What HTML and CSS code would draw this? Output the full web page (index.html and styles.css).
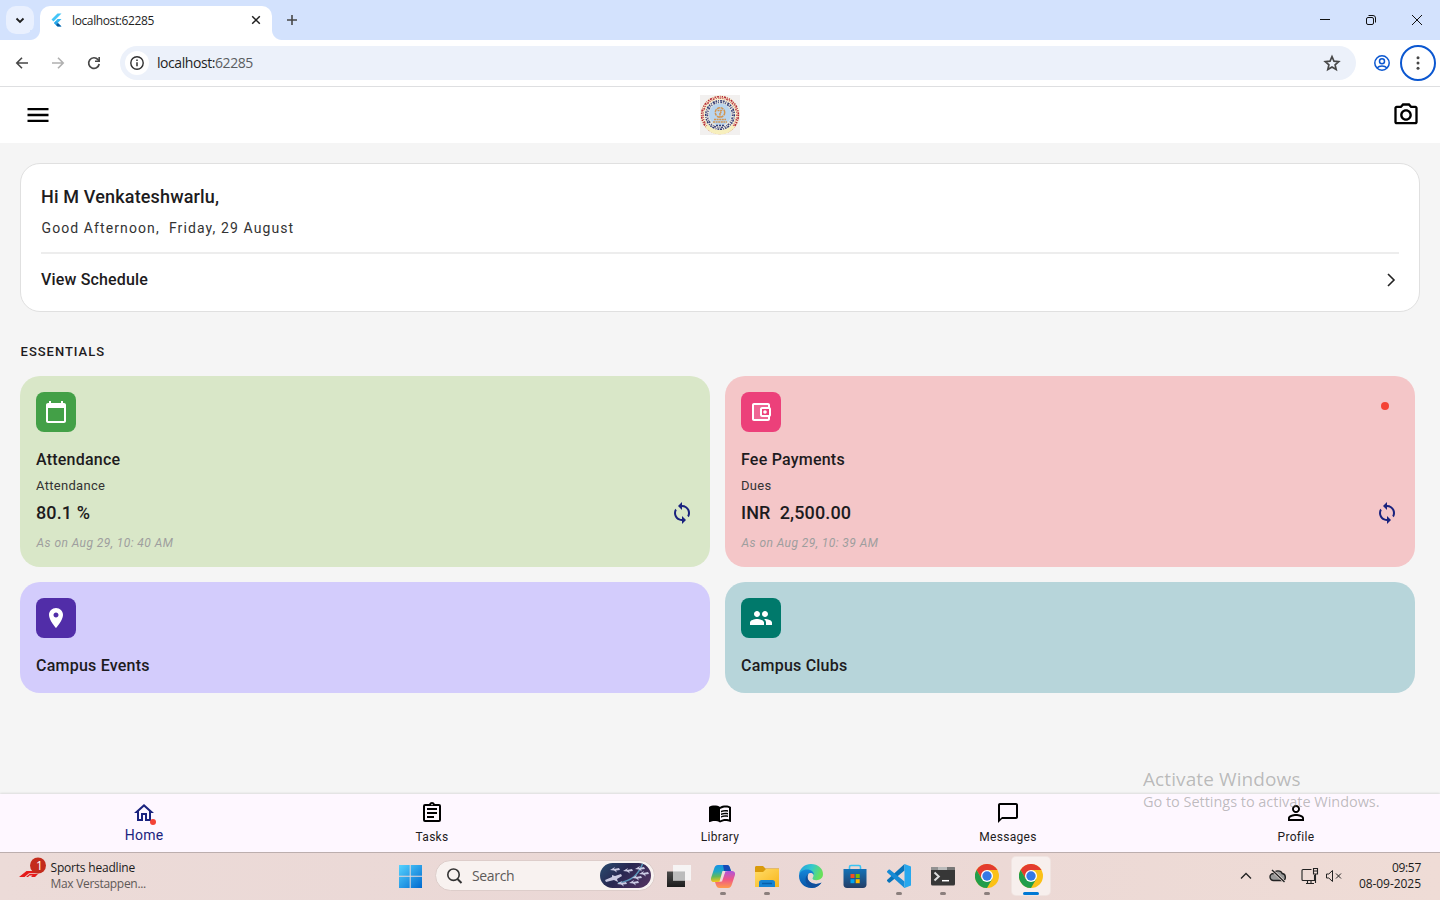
FILE: index.html
```html
<!DOCTYPE html>
<html lang="en">
<head>
<meta charset="utf-8">
<title>localhost:62285</title>
<link rel="stylesheet" href="styles.css">
</head>
<body>
<div class="screen">
  <header class="tabstrip">
    <div class="tab-search"><svg width="28" height="28" viewBox="0 0 28 28"><path d="M10.5 12.5 14 16l3.500-3.500" fill="none" stroke="#1f1f1f" stroke-width="1.800"/></svg></div>
    <div class="tab">
      <svg class="favicon" width="16" height="16" viewBox="0 0 16 16"><path d="M9.500 1.500h4L5.500 9.500l-2-2z" fill="#44c5f8"/><path d="M9.500 7h4L9.700 11l3.800 3.500h-4L6 11z" fill="#35b8f3"/><path d="m6 11 2-2 2 2-2 2z" fill="#29a5e8"/><path d="m8 13 2-2 3.500 3.500h-4z" fill="#09579d"/></svg>
      <span class="tab-title">localhost:62285</span>
      <svg class="tab-close" width="16" height="16" viewBox="0 0 16 16"><path d="m4.200 4.200 7.600 7.600m0-7.600-7.600 7.600" stroke="#1f1f1f" stroke-width="1.500"/></svg>
    </div>
    <svg class="new-tab" width="16" height="16" viewBox="0 0 16 16"><path d="M8 3v10M3 8h10" stroke="#474747" stroke-width="1.600"/></svg>
    <div class="window-buttons">
      <svg width="46" height="40" viewBox="0 0 46 40"><path d="M18 19.500h10" stroke="#111"/></svg>
      <svg width="46" height="40" viewBox="0 0 46 40"><g fill="none" stroke="#111"><rect x="18.500" y="17.500" width="7" height="7" rx="1.500"/><path d="M20.500 15.500h4.500a2.500 2.500 0 0 1 2.500 2.500v4.500"/></g></svg>
      <svg width="46" height="40" viewBox="0 0 46 40"><path d="m18 15 10 10m0-10-10 10" stroke="#111"/></svg>
    </div>
  </header>
  <div class="toolbar">
    <svg class="tool back" width="16" height="16" viewBox="0 0 16 16"><path d="M14 8H3m5-5.200L2.800 8 8 13.200" fill="none" stroke="#474747" stroke-width="1.600"/></svg>
    <svg class="tool forward" width="16" height="16" viewBox="0 0 16 16"><path d="M2 8h11M8 2.800 13.200 8 8 13.200" fill="none" stroke="#b0b0b0" stroke-width="1.600"/></svg>
    <svg class="tool reload" width="16" height="16" viewBox="0 0 16 16"><path d="M13.200 9A5.300 5.300 0 1 1 12 4.600L13.500 6" fill="none" stroke="#474747" stroke-width="1.700"/><path d="M14 2v5H9V5.500h3.400V2z" fill="#474747"/></svg>
    <div class="omnibox">
      <div class="site-info"><svg width="16" height="16" viewBox="0 0 16 16"><circle cx="8" cy="8" r="6.200" fill="none" stroke="#303030" stroke-width="1.400"/><path d="M8 7.200v4M8 4.500V6" stroke="#303030" stroke-width="1.500"/></svg></div>
      <span class="url">localhost:<i>62285</i></span>
      <svg class="star" width="18" height="18" viewBox="0 0 24 24"><path d="m12 3.500 2.600 6 6.400.6-4.900 4.300 1.500 6.300-5.600-3.400-5.600 3.400 1.500-6.300L3 10.100l6.400-.6z" fill="none" stroke="#474747" stroke-width="2.200"/></svg>
    </div>
    <svg class="account" width="18" height="18" viewBox="0 0 18 18"><g fill="none" stroke="#0b57d0" stroke-width="1.500"><circle cx="9" cy="9" r="7.200"/><circle cx="9" cy="7.200" r="2.500"/><path d="M3.900 14c2.600-2.700 7.600-2.700 10.200 0"/></g></svg>
    <div class="menu-ring"><svg width="16" height="16" viewBox="0 0 16 16" fill="#474747"><circle cx="8" cy="2.800" r="1.500"/><circle cx="8" cy="8" r="1.500"/><circle cx="8" cy="13.200" r="1.500"/></svg></div>
  </div>

  <div class="appbar">
    <svg width="28" height="28" viewBox="0 0 24 24"><path d="M3 18h18v-2H3v2zm0-5h18v-2H3v2zm0-7v2h18V6H3z"/></svg>
    <svg class="crest" width="40" height="40" viewBox="0 0 40 40">
      <rect width="40" height="40" fill="#f2f0ef"/>
      <circle cx="20" cy="20" r="19.600" fill="#f8f3d2"/>
      <circle cx="20" cy="20" r="18.400" fill="none" stroke="#b3283a" stroke-width="1.500" stroke-dasharray="1.300 1 2.200 .9 .8 1.200" pathLength="116"/>
      <circle cx="20" cy="20" r="16.900" fill="none" stroke="#c2424b" stroke-width="1.400" stroke-dasharray="1 1.300 .7 .8 1.900 1.100"/>
      <path d="M5 32a19 19 0 0 0 30 0l-4-3a14 14 0 0 1-22 0z" fill="#f7efbd"/>
      <circle cx="20" cy="20" r="15.200" fill="#eceadf"/>
      <circle cx="20" cy="20" r="14.300" fill="none" stroke="#2f3872" stroke-width="1.500" stroke-dasharray="1.500 1.100 .8 1.300 2.200 .9"/>
      <circle cx="20" cy="20" r="12.600" fill="none" stroke="#3c4580" stroke-width="1.600" stroke-dasharray="1 1.500 1.900 .8 .7 1.200"/>
      <circle cx="20" cy="19.500" r="11" fill="#b9d5ef"/>
      <g fill="none" stroke="#d39550" stroke-width="1.500"><circle cx="20" cy="17.500" r="4.700" stroke-dasharray="3 .7"/><path d="M17.500 15.500h4l-1 2.500M20 18v5M14 24.500h12M13 27h14" stroke-dasharray="2 .6"/></g>
      <path d="M16 30.500h8" stroke="#343d78" stroke-width="1.500" stroke-dasharray="2 1"/>
    </svg>
    <svg width="28" height="28" viewBox="0 0 24 24"><path d="M14.120 4l1.830 2H20v12H4V6h4.050l1.830-2h4.240M15 2H9L7.170 4H4c-1.100 0-2 .9-2 2v12c0 1.100.9 2 2 2h16c1.100 0 2-.9 2-2V6c0-1.100-.9-2-2-2h-3.170L15 2zm-3 7c1.650 0 3 1.350 3 3s-1.350 3-3 3-3-1.350-3-3 1.350-3 3-3m0-2c-2.760 0-5 2.240-5 5s2.240 5 5 5 5-2.240 5-5-2.240-5-5-5z"/></svg>
  </div>

  <main class="content">
    <section class="greeting">
      <h1>Hi M Venkateshwarlu,</h1>
      <p class="date">Good Afternoon,&nbsp; Friday, 29 August</p>
      <div class="schedule"><span>View Schedule</span><svg width="16" height="16" viewBox="0 0 16 16"><path d="m5 2 6 6-6 6" fill="none" stroke="#222" stroke-width="1.600"/></svg></div>
    </section>
    <h2 class="section-title">ESSENTIALS</h2>
    <div class="cards">
      <article class="card green">
        <div class="tile"><svg width="24" height="24" viewBox="0 0 24 24"><path d="M20 3h-1V1h-2v2H7V1H5v2H4c-1.100 0-2 .9-2 2v16c0 1.100.9 2 2 2h16c1.100 0 2-.9 2-2V5c0-1.100-.9-2-2-2zm0 18H4V8h16v13z"/></svg></div>
        <h3>Attendance</h3>
        <p class="label">Attendance</p>
        <div class="value"><b>80.1 %</b><svg width="24" height="24" viewBox="0 0 24 24"><path d="M12 4V1L8 5l4 4V6c3.310 0 6 2.690 6 6 0 1.010-.25 1.970-.7 2.800l1.460 1.460C19.540 15.030 20 13.570 20 12c0-4.420-3.580-8-8-8zm0 14c-3.310 0-6-2.690-6-6 0-1.010.25-1.970.7-2.800L5.240 7.740C4.460 8.970 4 10.430 4 12c0 4.420 3.580 8 8 8v3l4-4-4-4v3z"/></svg></div>
        <p class="asof">As on Aug 29, 10: 40 AM</p>
      </article>
      <article class="card pink">
        <div class="tile"><svg width="24" height="24" viewBox="0 0 24 24"><path d="M21 7.280V5c0-1.100-.9-2-2-2H5c-1.110 0-2 .9-2 2v14c0 1.100.89 2 2 2h14c1.100 0 2-.9 2-2v-2.280c.59-.35 1-.98 1-1.720V9c0-.74-.41-1.370-1-1.720zM20 9v6h-7V9h7zM5 19V5h14v2h-6c-1.100 0-2 .9-2 2v6c0 1.100.9 2 2 2h6v2H5z"/><path d="M5 5h14v2h-6c-1.100 0-2 .9-2 2v6c0 1.100.9 2 2 2h6v2H5z" fill-opacity="0.200"/><circle cx="16" cy="12" r="1.800"/></svg></div>
        <i class="alert-dot"></i>
        <h3>Fee Payments</h3>
        <p class="label">Dues</p>
        <div class="value"><b>INR&nbsp; 2,500.00</b><svg width="24" height="24" viewBox="0 0 24 24"><path d="M12 4V1L8 5l4 4V6c3.310 0 6 2.690 6 6 0 1.010-.25 1.970-.7 2.800l1.460 1.460C19.540 15.030 20 13.570 20 12c0-4.420-3.580-8-8-8zm0 14c-3.310 0-6-2.690-6-6 0-1.010.25-1.970.7-2.800L5.240 7.740C4.460 8.970 4 10.430 4 12c0 4.420 3.580 8 8 8v3l4-4-4-4v3z"/></svg></div>
        <p class="asof">As on Aug 29, 10: 39 AM</p>
      </article>
      <article class="card violet">
        <div class="tile"><svg width="24" height="24" viewBox="0 0 24 24"><path d="M12 2C8.130 2 5 5.130 5 9c0 5.250 7 13 7 13s7-7.750 7-13c0-3.870-3.130-7-7-7zm0 9.500c-1.380 0-2.500-1.120-2.500-2.500s1.120-2.500 2.500-2.500 2.500 1.120 2.500 2.500-1.120 2.500-2.500 2.500z"/></svg></div>
        <h3>Campus Events</h3>
      </article>
      <article class="card teal">
        <div class="tile"><svg width="24" height="24" viewBox="0 0 24 24"><path d="M16 11c1.660 0 2.990-1.340 2.990-3S17.660 5 16 5c-1.660 0-3 1.340-3 3s1.340 3 3 3zm-8 0c1.660 0 2.990-1.340 2.990-3S9.660 5 8 5C6.340 5 5 6.340 5 8s1.340 3 3 3zm0 2c-2.330 0-7 1.170-7 3.500V19h14v-2.500c0-2.330-4.670-3.500-7-3.500zm8 0c-.29 0-.62.020-.97.050 1.160.84 1.970 1.970 1.970 3.450V19h6v-2.500c0-2.330-4.670-3.500-7-3.500z"/></svg></div>
        <h3>Campus Clubs</h3>
      </article>
    </div>
  </main>

  <nav class="bottom-nav">
    <div class="nav-item active"><svg width="24" height="24" viewBox="0 0 24 24"><path d="M12 5.690l5 4.500V18h-2v-6H9v6H7v-7.810l5-4.500M12 3L2 12h3v8h6v-6h2v6h6v-8h3L12 3z"/></svg><i class="nav-dot"></i><span>Home</span></div>
    <div class="nav-item"><svg width="24" height="24" viewBox="0 0 24 24"><path fill-rule="evenodd" d="M7 15h7v2H7zm0-4h10v2H7zm0-4h10v2H7zM19 3h-4.180C14.400 1.840 13.300 1 12 1s-2.400.84-2.820 2H5a2 2 0 0 0-2 2v14a2 2 0 0 0 2 2h14a2 2 0 0 0 2-2V5a2 2 0 0 0-2-2zm-7-.25a.75.75 0 1 1 0 1.500.75.75 0 0 1 0-1.500zM19 19H5V5h14z"/></svg><span>Tasks</span></div>
    <div class="nav-item"><svg width="24" height="24" viewBox="0 0 24 24"><path d="M21 5c-1.110-.35-2.330-.5-3.500-.5-1.950 0-4.050.4-5.500 1.500-1.450-1.100-3.550-1.500-5.500-1.500S2.450 4.900 1 6v14.650c0 .25.25.5.5.5.1 0 .15-.05.25-.05C3.100 20.450 5.050 20 6.500 20c1.950 0 4.050.4 5.500 1.500 1.350-.85 3.800-1.500 5.500-1.500 1.650 0 3.350.3 4.750 1.050.1.050.15.050.25.050.25 0 .5-.25.5-.5V6c-.6-.45-1.250-.75-2-1zm0 13.500c-1.100-.35-2.300-.5-3.500-.5-1.700 0-4.150.65-5.500 1.500V8c1.350-.85 3.800-1.500 5.500-1.500 1.200 0 2.400.15 3.500.5v11.500z"/><path d="M17.500 10.500c.88 0 1.730.09 2.500.26V9.240c-.79-.15-1.640-.24-2.500-.24-1.700 0-3.240.29-4.500.83v1.660c1.130-.64 2.700-.99 4.500-.99zM13 12.490v1.660c1.130-.64 2.700-.99 4.500-.99.88 0 1.730.09 2.500.26V11.900c-.79-.15-1.640-.24-2.500-.24-1.700 0-3.240.3-4.500.83zM17.500 14.330c-1.700 0-3.240.29-4.500.83v1.660c1.130-.64 2.700-.99 4.500-.99.88 0 1.730.09 2.500.26v-1.520c-.79-.16-1.640-.24-2.500-.24z"/></svg><span>Library</span></div>
    <div class="nav-item"><svg width="24" height="24" viewBox="0 0 24 24"><path d="M20 2H4c-1.100 0-2 .9-2 2v18l4-4h14c1.100 0 2-.9 2-2V4c0-1.100-.9-2-2-2zm0 14H6l-2 2V4h16v12z"/></svg><span>Messages</span></div>
    <div class="nav-item"><svg width="24" height="24" viewBox="0 0 24 24"><path d="M12 5.900c1.160 0 2.100.94 2.100 2.100s-.94 2.100-2.100 2.100S9.900 9.160 9.900 8s.94-2.100 2.100-2.100m0 9c2.970 0 6.100 1.460 6.100 2.100v1.100H5.900V17c0-.64 3.130-2.100 6.100-2.100M12 4C9.790 4 8 5.790 8 8s1.790 4 4 4 4-1.790 4-4-1.790-4-4-4zm0 9c-2.670 0-8 1.340-8 4v3h16v-3c0-2.660-5.330-4-8-4z"/></svg><span>Profile</span></div>
  </nav>

  <div class="watermark"><div class="wm-title">Activate Windows</div><div class="wm-sub">Go to Settings to activate Windows.</div></div>

  <footer class="taskbar">
    <div class="widget">
      <svg width="28" height="28" viewBox="0 0 28 28"><path d="M1 24 8.500 18h14l-2 2.200H11L6.500 24zM8 24l3.500-3h8.500l-3 3h-4l1.500-1.500h-3L10 24z" fill="#e51b1b"/><circle cx="20" cy="12.500" r="8" fill="#c42b1c"/></svg>
      <b class="badge">1</b>
      <div class="news"><span class="news-title">Sports headline</span><span class="news-sub">Max Verstappen...</span></div>
    </div>
    <div class="apps">
      <svg class="start" width="24" height="24" viewBox="0 0 24 24"><defs><linearGradient id="win" x2="1" y2="1"><stop stop-color="#55d3ff"/><stop offset="1" stop-color="#0069cf"/></linearGradient></defs><path d="M1 1h10.700v10.700H1zM12.700 1H24v10.700H12.700zM1 12.700h10.700V24H1zM12.700 12.700H24V24H12.700z" fill="url(#win)"/></svg>
      <div class="search">
        <svg width="18" height="18" viewBox="0 0 18 18"><g fill="none" stroke="#333" stroke-width="1.600"><circle cx="7.500" cy="7.700" r="5.700"/><path d="m11.500 12 4 4" stroke-width="2"/></g></svg>
        <span>Search</span>
        <svg class="thumb" width="52" height="26" viewBox="0 0 52 26"><defs><linearGradient id="sea" x2="1" y2=".5"><stop stop-color="#294d70"/><stop offset=".5" stop-color="#282751"/><stop offset="1" stop-color="#4a315e"/></linearGradient><clipPath id="pill"><rect width="51" height="25" rx="12.500"/></clipPath></defs><g clip-path="url(#pill)"><rect width="52" height="26" fill="url(#sea)"/><path d="M43 0C38 12 32 18 18 20" stroke="#5a98bb" stroke-width="1.500" fill="none"/><g fill="#c9c9e2"><path id="fish" d="m10 7 5-3-1 2 5-1 1 2-4 .5 1 2-3-2z"/><path d="m5 17 7-3 0-2 3 1 6-2 1 2-5 3 1 3-4-2-8 2z"/><use href="#fish" x="13" y="1"/><use href="#fish" x="25" y="-1"/><use href="#fish" x="29" y="4"/><use href="#fish" x="22" y="8"/><use href="#fish" x="7" y="14"/><use href="#fish" x="19" y="13"/></g></g></svg>
      </div>
      <div class="app"><svg width="24" height="24" viewBox="0 0 24 24"><defs><linearGradient id="tv" y2="1" x2="0"><stop stop-color="#4a4a4a"/><stop offset="1" stop-color="#1c1c1c"/></linearGradient></defs><path d="M0 7.500h18V23H0z" fill="url(#tv)"/><path d="M6 1h18v15.500H6z" fill="#f7f7f7" fill-opacity=".9"/><path d="M6 7.500h12v9H6z" fill="#bcbcbc"/></svg></div>
      <div class="app open"><svg width="24" height="24" viewBox="0 0 24 24"><defs><linearGradient id="cpa" y2="1" x2=".1"><stop stop-color="#168fe8"/><stop offset=".4" stop-color="#20a8c5"/><stop offset=".7" stop-color="#65b958"/><stop offset="1" stop-color="#f5c51b"/></linearGradient><linearGradient id="cpb" x2="0" y2="1"><stop stop-color="#ae54dc"/><stop offset=".5" stop-color="#ef5786"/><stop offset="1" stop-color="#ff9b4b"/></linearGradient></defs><path d="M7 1h9c2 0 2.600 1.600 3 3l1 3h-4c-2.500 0-3 1.500-3.600 3.500l-1.300 4.200C10.300 17 9 18 7 18H3c-2.500 0-3.600-2-2.800-4.600L3 5c.8-2.500 1.800-4 4-4z" fill="url(#cpa)"/><path d="M17 24H8.500c-2.300 0-3-1.500-3.500-3l-1-3h3.500c2.500 0 3.300-1.300 4-3.500l1.400-4.200C13.700 8 14.700 7 17 7h4c2.500 0 3.600 2 2.800 4.600L21 20c-.8 2.500-1.800 4-4 4z" fill="url(#cpb)"/><path d="M12 1h4c2 0 2.600 1.600 3 3l1 3h-4c-1.300 0-2.200.5-2.700 1.200z" fill="#174bb7"/><path d="m11.500 7h3L11 17.500H8.500z" fill="#f1dcda"/></svg></div>
      <div class="app open"><svg width="24" height="24" viewBox="0 0 24 24"><defs><linearGradient id="fold" x2="1" y2="1"><stop stop-color="#ffdc68"/><stop offset="1" stop-color="#f8b51a"/></linearGradient></defs><path d="M0 3.500C0 2.500.7 2 1.500 2H8l2.500 2.500H24V12H0z" fill="#d99a0b"/><path d="M0 8h8l3-3h13v18H0z" fill="url(#fold)"/><path d="M4 23v-4.500c0-1.500 1-2.500 2.500-2.500h11c1.500 0 2.500 1 2.500 2.500V23z" fill="#1683d3"/><path d="M7 19.500h10" stroke="#075fab" stroke-width="1.500"/></svg></div>
      <div class="app"><svg width="24" height="24" viewBox="0 0 24 24"><defs><linearGradient id="edt" x2="1" y2=".3"><stop stop-color="#209ce2"/><stop offset=".55" stop-color="#35c9cc"/><stop offset="1" stop-color="#68e05b"/></linearGradient><linearGradient id="edb" x2="0" y2="1"><stop stop-color="#1688db"/><stop offset="1" stop-color="#0753a5"/></linearGradient></defs><path d="M0 10C1 4 6 0 12 0c7 0 12 4.500 12 10 0 4-3 6.200-6.700 6.200-2.600 0-3.800-.9-3.800-1.700 0-.7 1-1.100 1-2.900C14.500 9 12 7.200 8.500 7.200 5 7.200 2 8.500 0 10z" fill="url(#edt)"/><path d="M0 12c0-4 4-6.500 8-6.500 4.500 0 7 2.700 7 5.500-1-1.500-2-2-3.500-2-2.500 0-3 2-3 4 0 4 4 7 8.500 7 2.500 0 4.500-1 5.500-1.500C20.500 22 16.500 24 12 24 5.500 24 0 18.600 0 12z" fill="url(#edb)"/><path d="M8.500 13c0 4 4 7 8.500 7 2.500 0 4.500-1 5.500-1.500-1.700 2.500-4 4-6.500 5-5 .5-9.500-3-9.500-7.500 0-3 1-5 3.500-6.500-1 1-1.500 2-1.500 3.500z" fill="#104f9c"/></svg></div>
      <div class="app"><svg width="24" height="24" viewBox="0 0 24 24"><defs><linearGradient id="bag" x2="0" y2="1"><stop stop-color="#1472b7"/><stop offset="1" stop-color="#233e67"/></linearGradient></defs><path d="M6.500 6V3c0-1 .5-1.500 1.500-1.500h8c1 0 1.500.5 1.500 1.500v3" fill="none" stroke="#39c3f4" stroke-width="1.600"/><path d="M.5 5h23v15.500c0 2-1.200 3.500-3.500 3.500H4C1.700 24 .5 22.500.5 20.500z" fill="url(#bag)"/><path d="M7.500 10h4v4h-4z" fill="#f25022"/><path d="M12.700 10h4v4h-4z" fill="#7fba00"/><path d="M7.500 15.200h4v4h-4z" fill="#00a4ef"/><path d="M12.700 15.200h4v4h-4z" fill="#ffb900"/></svg></div>
      <div class="app open"><svg width="24" height="24" viewBox="0 0 24 24"><path d="M17.500 0v6.500L3 18.500c-.5.4-1 .3-1.400 0L.3 17.200c-.5-.5-.5-1 0-1.500z" fill="#0873b9"/><path d="m.3 7 1.300-1.200c.4-.4.900-.4 1.400 0l14.500 11.700V24L.3 8.500c-.5-.5-.5-1 0-1.500z" fill="#178bd5"/><path d="M17.500 0 24 2.500v19L17.500 24c-.5.100-1-.2-1.300-.5 1 .5 1.300-.2 1.300-1z" fill="#27a8ee"/></svg></div>
      <div class="app open"><svg width="24" height="24" viewBox="0 0 24 24"><rect y="3" width="24" height="18.500" rx="1.500" fill="#373737"/><path d="M0 6V4.500C0 3.500.6 3 1.500 3H7v3z" fill="#929292"/><path d="M7 3h9v3H7z" fill="#bbb"/><path d="M16 3h6.500c.9 0 1.500.5 1.500 1.500V6h-8z" fill="#777"/><path d="m3.500 8.500 4.300 4-4.300 4" fill="none" stroke="#ddd" stroke-width="2"/><path d="M11 16.700h7" stroke="#fff" stroke-width="1.500"/></svg></div>
      <div class="app open"><svg width="24" height="24" viewBox="0 0 24 24"><g id="chrome"><circle cx="12" cy="12" r="12" fill="#fbc116"/><path d="M1.600 6A12 12 0 0 1 22.400 6H12v6l-5.200 3z" fill="#e33b2e"/><path d="M1.600 6A12 12 0 0 0 12 24l5.200-9-5.200-3-5.200 3z" fill="#219d4a"/><circle cx="12" cy="12" r="6" fill="#fff"/><circle cx="12" cy="12" r="4.700" fill="#3478e5"/></g></svg></div>
      <div class="app focused"><svg width="24" height="24" viewBox="0 0 24 24"><use href="#chrome"/></svg></div>
    </div>
    <div class="tray">
      <svg class="chev" width="14" height="14" viewBox="0 0 14 14"><path d="m2 9.500 5-5 5 5" fill="none" stroke="#222" stroke-width="1.300"/></svg>
      <svg class="cloud" width="18" height="16" viewBox="0 0 18 16"><path d="M4.500 12.500a3.500 3.500 0 0 1 0-7C6 2 12 2 13.200 5.500c4.200.5 4.200 7 0 7z" fill="#999" stroke="#222" stroke-width="1.400"/><path d="m3 2 12.500 12" stroke="#eee0dc" stroke-width="2.600"/><path d="m3 2 12.500 12" stroke="#222" stroke-width="1.400"/></svg>
      <svg class="net" width="18" height="18" viewBox="0 0 18 18"><g fill="none" stroke="#222" stroke-width="1.100"><path d="M10.500 2.500H2c-.7 0-1 .3-1 1v9c0 .7.300 1 1 1h11.500V8M5 16.500h8M6.500 13.500v3M10 13.500v3M12.500 1.500h4v5.500h-4zM14.500 7v9M12.500 4h4"/></g></svg>
      <svg class="vol" width="18" height="16" viewBox="0 0 18 16"><g fill="none" stroke="#222"><path d="M1.500 6h2.300L7.500 2.500v11L3.800 10H1.500zM11 5.500l5 5m0-5-5 5"/></g></svg>
      <div class="clock"><span class="time">09:57</span><span class="day">08-09-2025</span></div>
    </div>
  </footer>
</div>
</body>
</html>
```
FILE: styles.css
```css
* { box-sizing: border-box; }
body { margin: 0; font-family: Roboto, "Liberation Sans", sans-serif; color: #1d1b20; }
h1, h2, h3, p { margin: 0; font-weight: 500; white-space: nowrap; }
svg { display: block; flex: none; }
.screen { position: relative; width: 1440px; height: 900px; overflow: hidden; display: flex; flex-direction: column; background: #f5f5f5; }

.tabstrip { height: 40px; flex: none; display: flex; align-items: center; background: #d3e2fd; padding-left: 6px; font-family: "Open Sans", "Noto Sans", sans-serif; }
.tab-search { width: 28px; height: 28px; border-radius: 10px; background: #e9f0fe; }
.tab { position: relative; width: 232px; height: 34px; margin: 6px 0 0 6px; background: #fff; border-radius: 10px 10px 0 0; display: flex; align-items: center; padding: 0 8px; }
.tab::before, .tab::after { content: ""; position: absolute; bottom: 0; width: 10px; height: 10px; }
.tab::before { left: -10px; background: radial-gradient(circle at 0 0, #d3e2fd 9.500px, #fff 10.500px); }
.tab::after { right: -10px; background: radial-gradient(circle at 100% 0, #d3e2fd 9.500px, #fff 10.500px); }
.favicon { margin-top: -6px; }
.tab-title { flex: 1; margin: -5px 0 0 8px; font-size: 12px; letter-spacing: -0.380px; color: #1f1f1f; }
.tab-close { margin-top: -6px; }
.new-tab { margin-left: 12px; }
.window-buttons { margin-left: auto; display: flex; }

.toolbar { height: 47px; flex: none; display: flex; align-items: center; background: #fff; border-bottom: 1px solid #dedfe1; padding-left: 14px; }
.forward, .reload { margin-left: 20px; }
.omnibox { width: 1236px; height: 34px; margin-left: 18px; border-radius: 17px; background: #ecf1fa; display: flex; align-items: center; padding: 0 15px 0 5px; font-family: "Open Sans", "Noto Sans", sans-serif; }
.site-info { width: 24px; height: 24px; border-radius: 50%; background: #fff; display: grid; place-items: center; }
.url { flex: 1; margin: -2px 0 0 8px; font-size: 14px; letter-spacing: -0.430px; color: #1f1f1f; }
.url i { font-style: normal; color: #5a5d61; }
.account { margin-left: 17px; }
.menu-ring { width: 36px; height: 36px; margin-left: 9px; border: 2px solid #0b57d0; border-radius: 50%; display: grid; place-items: center; }

.appbar { height: 56px; flex: none; background: #fff; display: flex; align-items: center; justify-content: space-between; padding: 0 20px 0 24px; }
.crest { margin-left: -4px; }

.content { flex: 1; padding: 20px 20px 0; background: #f5f5f5; }
.greeting { height: 149px; background: #fff; border: 1px solid #e0e0e0; border-radius: 20px; padding: 20px; }
.greeting h1 { font-size: 18px; line-height: 26px; letter-spacing: 0.160px; }
.date { margin-top: 8px; padding-left: 0.500px; font-size: 14px; line-height: 20px; font-weight: 400; letter-spacing: 1.100px; color: #333; }
.schedule { margin-top: 14px; border-top: 2px solid #ededed; padding-top: 15px; display: flex; justify-content: space-between; align-items: center; font-size: 16px; line-height: 22px; font-weight: 500; letter-spacing: 0.170px; }
.section-title { margin-top: 31px; padding-left: 0.600px; font-size: 13px; line-height: 18px; letter-spacing: 0.970px; }
.cards { margin-top: 15px; width: 1395px; display: grid; grid-template-columns: 690px 690px; grid-template-rows: 191px 111px; gap: 15px; }
.card { position: relative; border-radius: 20px; padding: 16px; }
.green { background: #d9e7c8; }
.pink { background: #f4c6c8; }
.violet { background: #d3ccfc; }
.teal { background: #b7d5da; }
.tile { width: 40px; height: 40px; border-radius: 8px; display: grid; place-items: center; fill: #fff; }
.green .tile { background: #43a047; }
.pink .tile { background: #ec407a; }
.violet .tile { background: #512da8; }
.teal .tile { background: #00796b; }
.card h3 { margin-top: 17px; font-size: 16px; line-height: 22px; letter-spacing: 0.220px; }
.label { margin-top: 6px; font-size: 13px; line-height: 18px; font-weight: 400; letter-spacing: 0.300px; color: #333; }
.value { margin-top: 6px; height: 24px; display: flex; align-items: center; justify-content: space-between; fill: #1a237e; }
.value b { margin-top: -2px; font-size: 18px; font-weight: 500; letter-spacing: 0.120px; }
.asof { margin-top: 10px; padding-left: 0.600px; font-size: 12px; line-height: 16px; font-weight: 400; font-style: italic; letter-spacing: 0.420px; color: #9e9e9e; }
.alert-dot { position: absolute; right: 26px; top: 26px; width: 8px; height: 8px; border-radius: 50%; background: #f44336; }

.bottom-nav { height: 58px; flex: none; display: grid; grid-template-columns: repeat(5, 1fr); background: #fef7ff; box-shadow: 0 -1px 2px rgba(0,0,0,.1); z-index: 1; }
.nav-item { position: relative; display: flex; flex-direction: column; align-items: center; padding-top: 7px; font-size: 12px; letter-spacing: 0.300px; line-height: 16px; }
.nav-item span { margin-top: 4px; }
.active { color: #1a237e; fill: #1a237e; font-size: 14px; letter-spacing: 0.250px; }
.active span { margin-top: 2px; }
.nav-dot { position: absolute; left: 150px; top: 25px; width: 6px; height: 6px; border-radius: 50%; background: #f44336; }

.watermark { position: absolute; left: 1143px; top: 766px; z-index: 2; font-family: "Open Sans", "Noto Sans", sans-serif; color: rgba(120,120,120,.48); white-space: nowrap; }
.wm-title { font-size: 19px; line-height: 27px; letter-spacing: 0.100px; }
.wm-sub { font-size: 14.500px; line-height: 18px; letter-spacing: -0.030px; }

.taskbar { position: relative; height: 48px; flex: none; border-top: 1px solid #bcaeae; background: linear-gradient(90deg, #ecdbd8, #ead7d5 50%, #efdcd6); display: grid; grid-template-columns: 391px 1fr 201px; font-family: "Open Sans", "Noto Sans", sans-serif; z-index: 1; white-space: nowrap; }
.widget { position: relative; display: flex; padding-left: 18px; }
.badge { position: absolute; left: 36px; top: 5px; font-size: 12px; line-height: 16px; font-weight: 400; color: #fff; }
.news { margin: 7px 0 0 4.500px; display: flex; flex-direction: column; font-size: 12px; line-height: 16px; letter-spacing: -0.200px; }
.news-title { color: #1b1b1b; }
.news-sub { color: #5f5957; letter-spacing: -0.300px; }
.apps { display: flex; align-items: center; padding: 0 0 2px 7px; }
.search { width: 220px; height: 31px; margin-left: 13px; border: 1px solid #ddcdca; border-radius: 16px; background: #f8f2f0; display: flex; align-items: center; padding: 0 2px 0 10px; font-size: 14px; color: #5d5a59; }
.search span { flex: 1; margin-left: 8px; letter-spacing: -0.350px; }
.app { position: relative; width: 38px; height: 38px; margin-left: 6px; display: grid; place-items: center; border-radius: 4px; }
.search + .app { margin-left: 5px; }
.open::after, .focused::after { content: ""; position: absolute; left: 16px; bottom: 0; width: 6px; height: 3px; border-radius: 2px; background: #8b7f7d; }
.focused { background: #f7efed; box-shadow: 0 0 0 1px #f0e4e1; }
.focused::after { left: 11px; width: 16px; background: #0078d4; }
.tray { display: flex; align-items: center; padding-bottom: 1px; color: #1b1b1b; }
.cloud { margin-left: 16px; }
.net { margin-left: 14px; }
.vol { margin-left: 6px; }
.clock { margin-left: auto; padding-right: 19px; display: flex; flex-direction: column; text-align: right; font-size: 12px; line-height: 16px; letter-spacing: -0.300px; }
.day { letter-spacing: -0.050px; }
```
